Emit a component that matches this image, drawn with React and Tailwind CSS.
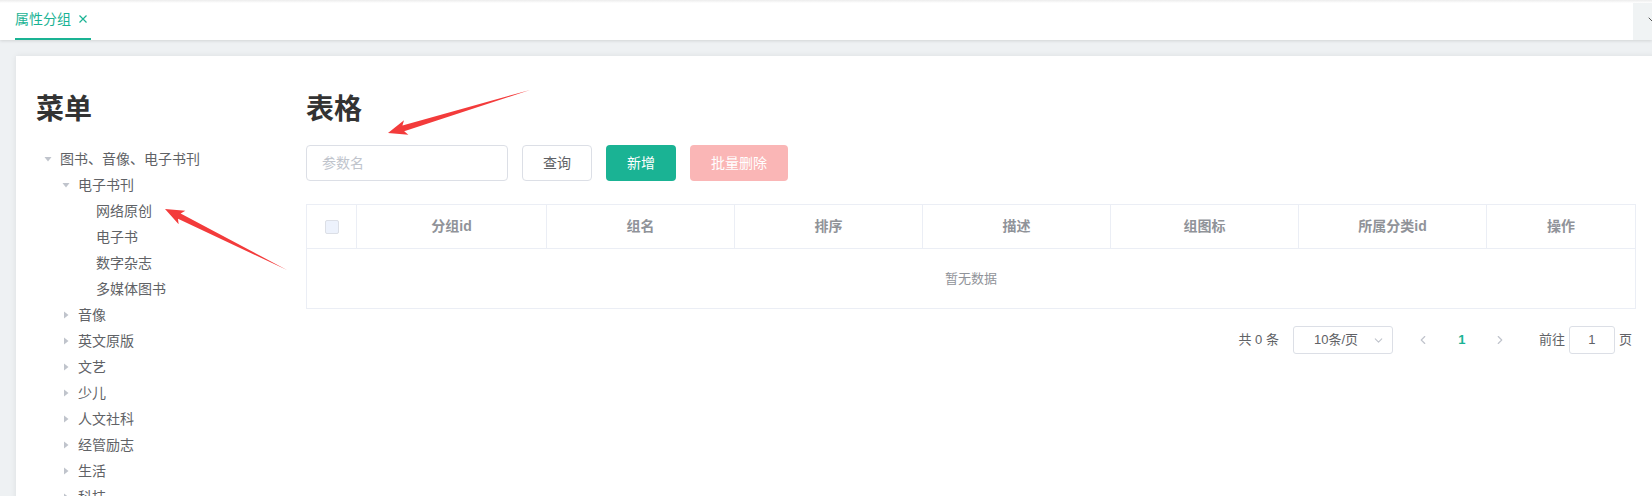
import { ChevronDown, ChevronLeft, ChevronRight } from "lucide-react";

const tree = [
  {
    label: "图书、音像、电子书刊",
    open: true,
    children: [
      {
        label: "电子书刊",
        open: true,
        children: [
          { label: "网络原创" },
          { label: "电子书" },
          { label: "数字杂志" },
          { label: "多媒体图书" },
        ],
      },
      { label: "音像", children: [] },
      { label: "英文原版", children: [] },
      { label: "文艺", children: [] },
      { label: "少儿", children: [] },
      { label: "人文社科", children: [] },
      { label: "经管励志", children: [] },
      { label: "生活", children: [] },
      { label: "科技", children: [] },
    ],
  },
];

const columns = ["分组id", "组名", "排序", "描述", "组图标", "所属分类id"];

function Caret({ open, leaf }) {
  return (
    <span className="w-[24px] h-[26px] flex items-center justify-center shrink-0">
      {!leaf && (
        <svg
          width="12"
          height="12"
          viewBox="0 0 12 12"
          className={open ? "rotate-90" : ""}
        >
          <polygon points="4,2.5 8.5,6 4,9.5" fill="#c0c4cc" />
        </svg>
      )}
    </span>
  );
}

function TreeNode({ node, level }) {
  const leaf = !node.children;
  return (
    <div>
      <div
        className="flex items-center h-[26px] text-[14px] text-[#606266]"
        style={{ paddingLeft: level * 18 }}
      >
        <Caret open={node.open} leaf={leaf} />
        <span>{node.label}</span>
      </div>
      {node.open &&
        node.children.map((c) => (
          <TreeNode key={c.label} node={c} level={level + 1} />
        ))}
    </div>
  );
}

// arrow polygon from tail to tip
function arrowPoints(tail, tip, headLen = 16, headW = 7.5, shaftW = 3) {
  const dx = tip[0] - tail[0];
  const dy = tip[1] - tail[1];
  const len = Math.hypot(dx, dy);
  const ux = dx / len;
  const uy = dy / len;
  const nx = -uy;
  const ny = ux;
  const bx = tip[0] - ux * headLen;
  const by = tip[1] - uy * headLen;
  const wx = bx - ux * 3;
  const wy = by - uy * 3;
  const pts = [
    [tail[0], tail[1]],
    [bx + nx * shaftW, by + ny * shaftW],
    [wx + nx * headW, wy + ny * headW],
    [tip[0], tip[1]],
    [wx - nx * headW, wy - ny * headW],
    [bx - nx * shaftW, by - ny * shaftW],
  ];
  return pts.map((p) => p.join(",")).join(" ");
}

export default function App() {
  return (
    <div className="relative w-[1652px] h-[496px] overflow-hidden bg-[#eef1f3] font-['Liberation_Sans','Noto_Sans_CJK_SC',sans-serif]">
      {/* Tab bar */}
      <div className="relative h-[40px] bg-white flex shadow-[0_1px_3px_rgba(0,0,0,0.12)] z-10">
        <div className="absolute top-0 left-0 right-0 h-[3px] bg-gradient-to-b from-[#ececec] to-white" />
        <div className="flex-1 pl-[15px]">
          <div className="relative inline-flex items-center h-[40px] text-[14px] text-[#1ab394] border-b-2 border-[#1ab394] pr-[3px]">
            <span>属性分组</span>
            <svg width="10" height="10" viewBox="0 0 10 10" className="ml-[7px]">
              <path d="M1.5 1.5 L8.5 8.5 M8.5 1.5 L1.5 8.5" stroke="#1ab394" strokeWidth="1.2" />
            </svg>
          </div>
        </div>
        <div className="w-[19px] h-[40px] bg-[#f0f3f4] flex items-center overflow-hidden">
          <ChevronDown size={16} color="#555" strokeWidth={1.5} className="ml-[12px] shrink-0" />
        </div>
      </div>

      {/* Card */}
      <div className="pt-[16px] pl-[16px]">
        <div className="w-[1640px] h-[460px] bg-white shadow-[0_0_6px_rgba(0,0,0,0.08)] flex pt-[34px] px-[20px]">
          {/* Left menu */}
          <div className="w-[270px] shrink-0">
            <h2 className="text-[28px] leading-[40px] font-bold text-[#333]">菜单</h2>
            <div className="mt-[16px]">
              {tree.map((n) => (
                <TreeNode key={n.label} node={n} level={0} />
              ))}
            </div>
          </div>

          {/* Right table */}
          <div className="flex-1">
            <h2 className="text-[28px] leading-[40px] font-bold text-[#333]">表格</h2>
            <div className="mt-[15px] flex items-center gap-[14px]">
              <div className="w-[202px] h-[36px] border border-[#dcdfe6] rounded-[4px] flex items-center px-[15px] text-[14px] text-[#c0c4cc]">
                参数名
              </div>
              <button className="w-[70px] h-[36px] border border-[#dcdfe6] rounded-[4px] text-[14px] text-[#606266] bg-white">
                查询
              </button>
              <button className="w-[70px] h-[36px] rounded-[4px] text-[14px] text-white bg-[#1ab394]">
                新增
              </button>
              <button className="w-[98px] h-[36px] rounded-[4px] text-[14px] text-white bg-[#fab6b6]">
                批量删除
              </button>
            </div>

            <div className="mt-[23px] border border-[#ebeef5]">
              <div className="flex h-[44px] border-b border-[#ebeef5] text-[14px] font-bold text-[#909399]">
                <div className="w-[50px] border-r border-[#ebeef5] flex items-center justify-center">
                  <span className="w-[14px] h-[14px] rounded-[2px] border border-[#dcdfe6] bg-[#edf2fc]" />
                </div>
                {columns.map((c, i) => (
                  <div
                    key={c}
                    className={`${i === 0 ? "w-[190px]" : "w-[188px]"} border-r border-[#ebeef5] flex items-center justify-center`}
                  >
                    {c}
                  </div>
                ))}
                <div className="flex-1 flex items-center justify-center">操作</div>
              </div>
              <div className="h-[59px] flex items-center justify-center text-[13px] text-[#909399]">
                暂无数据
              </div>
            </div>

            <div className="mt-[17px] flex justify-end items-center pr-[4px] text-[13px] text-[#606266]">
              <span>共 0 条</span>
              <div className="ml-[14px] w-[100px] h-[28px] border border-[#dcdfe6] rounded-[3px] flex items-center">
                <span className="flex-1 text-center pl-[6px]">10条/页</span>
                <ChevronDown size={13} color="#c0c4cc" className="mr-[7px]" />
              </div>
              <div className="ml-[12px] w-[36px] h-[28px] flex items-center justify-center">
                <ChevronLeft size={14} color="#c0c4cc" strokeWidth={2} />
              </div>
              <div className="ml-[3px] w-[36px] h-[28px] flex items-center justify-center font-bold text-[#1ab394]">
                1
              </div>
              <div className="ml-[2px] w-[36px] h-[28px] flex items-center justify-center">
                <ChevronRight size={14} color="#c0c4cc" strokeWidth={2} />
              </div>
              <span className="ml-[21px]">前往</span>
              <div className="ml-[4px] w-[46px] h-[28px] border border-[#dcdfe6] rounded-[3px] flex items-center justify-center">
                1
              </div>
              <span className="ml-[4px]">页</span>
            </div>
          </div>
        </div>
      </div>

      {/* Annotation arrows */}
      <svg
        className="absolute top-0 left-0 pointer-events-none z-20"
        width="1652"
        height="496"
        viewBox="0 0 1652 496"
      >
        <polygon points={arrowPoints([287, 270], [165, 209])} fill="#f33b3b" />
        <polygon points={arrowPoints([530, 90], [388, 133])} fill="#f33b3b" />
      </svg>
    </div>
  );
}
